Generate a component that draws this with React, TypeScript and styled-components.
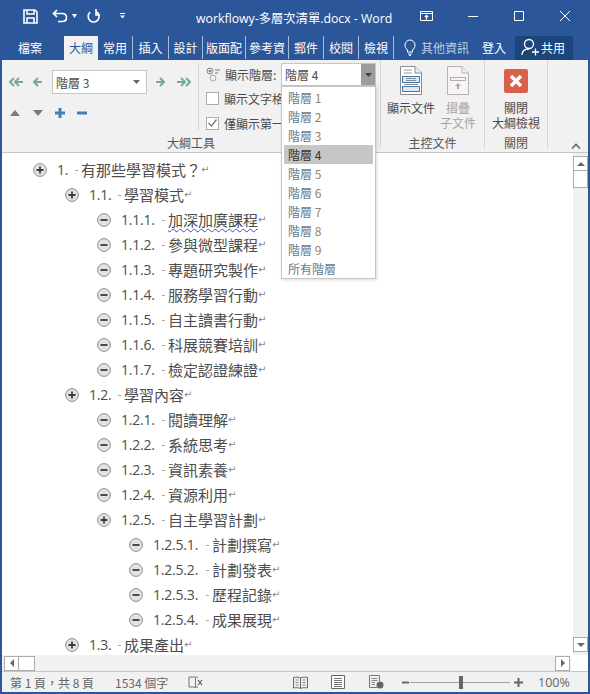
import * as React from "react";
import styled, { createGlobalStyle } from "styled-components";

const cjk = `"Noto Sans CJK TC", "Open Sans", sans-serif`;
const latin = `"Open Sans", "Noto Sans CJK TC", sans-serif`;

const GlobalStyle = createGlobalStyle`
    html, body {
        margin: 0;
        padding: 0;
        background: #2b579a;
    }
    * {
        box-sizing: border-box;
    }
`;

const Window = styled.div`
    width: 590px;
    height: 694px;
    display: flex;
    flex-direction: column;
    background: #2b579a;
    padding: 0 2px 2px 2px;
    overflow: hidden;
    font-family: ${cjk};
`;

/* title bar */
const TitleBar = styled.div`
    height: 36px;
    flex: none;
    display: flex;
    align-items: center;
    color: #fff;
`;

const Qat = styled.div`
    width: 190px;
    flex: none;
    display: flex;
    align-items: center;
    padding: 0 0 4px 21px;
`;

const QatButton = styled.span<{ $w: number }>`
    width: ${(p) => p.$w}px;
    display: flex;
    align-items: center;
`;

const DocTitle = styled.div`
    flex: none;
    width: 212px;
    padding-left: 4px;
    font-family: ${latin};
    font-size: 12.3px;
    white-space: nowrap;
`;

const WindowButtons = styled.div`
    display: flex;
    align-items: center;
    padding-bottom: 4px;
`;

const WindowButton = styled.span`
    width: 46px;
    display: flex;
    justify-content: center;
    align-items: center;
`;

/* tabs */
const TabBar = styled.div`
    height: 24px;
    flex: none;
    display: flex;
    align-items: stretch;
    color: #fff;
    font-size: 12px;
    padding-left: 16px;
`;

const FileTab = styled.div`
    width: 46px;
    padding-bottom: 2px;
    display: flex;
    align-items: center;
`;

const Tab = styled.div<{ $active?: boolean; $w: number; $sep?: boolean }>`
    width: ${(p) => p.$w}px;
    padding-bottom: ${(p) => (p.$active ? 2 : 1)}px;
    display: flex;
    align-items: center;
    justify-content: center;
    white-space: nowrap;
    overflow: hidden;
    background: ${(p) => (p.$active ? "#f1f1f1" : "transparent")};
    color: ${(p) => (p.$active ? "#2b579a" : "#fff")};
    ${(p) => (p.$sep ? "border-right: 1px solid #a9bdd9; margin-bottom: 1px;" : "")}
`;

const Hint = styled.div`
    display: flex;
    align-items: center;
    gap: 5px;
    margin-left: 10px;
    width: 78px;
    padding-bottom: 2px;
    color: #bcd0ea;
`;

const Login = styled.div`
    width: 40px;
    padding-bottom: 2px;
    display: flex;
    align-items: center;
`;

const ShareBox = styled.div`
    width: 58px;
    margin-left: -7px;
    padding: 0 0 2px 6px;
    background: #1c4679;
    display: flex;
    align-items: center;
    gap: 2px;
`;

/* ribbon */
const Ribbon = styled.div`
    height: 93px;
    flex: none;
    display: flex;
    background: #f1f1f1;
    border-bottom: 1px solid #c6c6c6;
    position: relative;
    color: #4a4a4a;
    font-size: 12px;
`;

const Group = styled.div<{ $w: number }>`
    width: ${(p) => p.$w}px;
    flex: none;
    display: flex;
    flex-direction: column;
    padding-top: 3px;
    border-right: 1px solid #d4d4d4;
    margin-bottom: 4px;
`;

const GroupBody = styled.div`
    flex: 1;
    display: flex;
    min-height: 0;
`;

const GroupLabel = styled.div`
    height: 14px;
    line-height: 14px;
    margin-bottom: -2px;
    text-align: center;
    font-size: 12px;
    color: #555;
`;

const PromoteColumn = styled.div`
    width: 197px;
    flex: none;
    display: flex;
    flex-direction: column;
    padding: 7px 0 0 7px;
    border-right: 1px solid #d4d4d4;
    margin-bottom: 6px;
`;

const ArrowRow = styled.div`
    height: 24px;
    display: flex;
    align-items: center;
`;

const ArrowSlot = styled.span<{ $w: number }>`
    width: ${(p) => p.$w}px;
    display: flex;
    align-items: center;
`;

const LevelSelect = styled.div`
    width: 95px;
    height: 24px;
    margin-right: 8px;
    background: #fff;
    border: 1px solid #c6c6c6;
    display: flex;
    align-items: center;
    justify-content: space-between;
    padding: 0 6px 0 3px;
    font-size: 12px;
`;

const MoveRow = styled.div`
    margin-top: 14px;
    padding-left: 1px;
    display: flex;
    align-items: center;
`;

const ViewColumn = styled.div`
    flex: 1;
    display: flex;
    flex-direction: column;
    padding-left: 7px;
`;

const ShowLevelRow = styled.div`
    height: 22px;
    display: flex;
    align-items: center;
    gap: 4px;
`;

const CheckRow = styled.div`
    height: 24px;
    display: flex;
    align-items: center;
    gap: 5px;
    white-space: nowrap;
    margin-top: 1px;
`;

const CheckBox = styled.span`
    width: 13px;
    height: 13px;
    flex: none;
    background: #fff;
    border: 1px solid #ababab;
    display: flex;
    align-items: center;
    justify-content: center;
`;

const ShowSelect = styled.div`
    position: absolute;
    left: 279px;
    top: 3px;
    width: 95px;
    height: 23px;
    background: #fff;
    border: 1px solid #c6c6c6;
    display: flex;
    align-items: center;
    padding-left: 3px;
    font-size: 12px;
    z-index: 3;
`;

const ShowArrow = styled.span`
    position: absolute;
    right: 0;
    top: 0;
    bottom: 0;
    width: 14px;
    background: #9c9c9c;
    display: flex;
    align-items: center;
    justify-content: center;
`;

const Dropdown = styled.div`
    position: absolute;
    left: 279px;
    top: 26px;
    width: 95px;
    height: 193px;
    background: #fff;
    border: 1px solid #c6c6c6;
    box-shadow: 1px 1px 3px rgba(0, 0, 0, 0.15);
    padding: 1px 2px;
    z-index: 4;
`;

const DropItem = styled.div<{ $selected?: boolean }>`
    height: 19px;
    line-height: 19px;
    padding-left: 4px;
    font-size: 12px;
    background: ${(p) => (p.$selected ? "#c6c6c6" : "transparent")};
    color: ${(p) => (p.$selected ? "#333" : "#5f7d96")};
`;

const LevelNumber = styled.span<{ $selected?: boolean }>`
    color: ${(p) => (p.$selected ? "#333" : "#96806c")};
`;

const BigButtons = styled.div<{ $left: number }>`
    flex: 1;
    display: flex;
    padding-left: ${(p) => p.$left}px;
`;

const BigButton = styled.div<{ $disabled?: boolean; $w: number }>`
    width: ${(p) => p.$w}px;
    display: flex;
    flex-direction: column;
    align-items: center;
    text-align: center;
    line-height: 15px;
    font-size: 12px;
    white-space: nowrap;
    color: ${(p) => (p.$disabled ? "#a6a6a6" : "#4a4a4a")};
`;

const BigIcon = styled.span`
    height: 31px;
    margin-top: 2px;
    margin-bottom: 4px;
    display: flex;
    align-items: center;
`;

const CollapseRibbon = styled.span`
    position: absolute;
    right: 7px;
    bottom: 3px;
    display: flex;
`;

/* document */
const DocArea = styled.div`
    flex: 1;
    min-height: 0;
    display: flex;
    background: #fff;
`;

const Page = styled.div`
    flex: 1;
    padding-top: 4px;
    overflow: hidden;
`;

const OutlineRow = styled.div<{ $level: number }>`
    height: 25px;
    display: flex;
    align-items: center;
    padding-left: ${(p) => 31 + (p.$level - 1) * 32}px;
    color: #4d4d4d;
    font-size: 15px;
    white-space: nowrap;
`;

const Bullet = styled.span`
    width: 14px;
    height: 14px;
    flex: none;
    margin-right: 10px;
    display: flex;
`;

const OutlineNumber = styled.span<{ $w: number }>`
    width: ${(p) => p.$w}px;
    flex: none;
    font-family: ${latin};
    font-size: 14px;
    letter-spacing: -0.2px;
    position: relative;
`;

const TabDot = styled.span`
    position: absolute;
    right: 3px;
    top: 50%;
    width: 3px;
    height: 1px;
    background: #aaa;
`;

const Squiggle = styled.span`
    text-decoration: underline wavy #3b50c8 1px;
    text-underline-offset: 2px;
`;

const ParaMark = styled.span`
    color: #888;
    font-size: 10px;
    font-family: "DejaVu Sans", sans-serif;
`;

const VScroll = styled.div`
    width: 15px;
    flex: none;
    background: #f1f1f1;
    display: flex;
    flex-direction: column;
    padding-top: 3px;
    padding-bottom: 3px;
`;

const ScrollButton = styled.span`
    width: 15px;
    height: 15px;
    flex: none;
    background: #fff;
    border: 1px solid #ababab;
    display: flex;
    align-items: center;
    justify-content: center;
`;

const VThumb = styled.span`
    width: 15px;
    height: 18px;
    background: #fff;
    border: 1px solid #ababab;
    margin-top: -1px;
`;

const ScrollSpace = styled.span`
    flex: 1;
`;

const HScrollRow = styled.div`
    height: 16px;
    flex: none;
    display: flex;
    background: #fff;
`;

const HScroll = styled.div`
    width: 569px;
    flex: none;
    background: #f1f1f1;
    display: flex;
    align-items: center;
    padding: 0 1px 0 2px;
`;

const HThumb = styled.span`
    width: 17px;
    height: 15px;
    background: #fff;
    border: 1px solid #ababab;
    margin-left: -1px;
`;

/* status bar */
const StatusBar = styled.div`
    height: 21px;
    flex: none;
    background: #f1f1f1;
    border-top: 1px solid #c6c6c6;
    display: flex;
    align-items: center;
    color: #666;
    font-size: 12px;
    padding-left: 8px;
`;

const StatusText = styled.span<{ $w: number }>`
    width: ${(p) => p.$w}px;
    flex: none;
    white-space: nowrap;
`;

const StatusIcon = styled.span<{ $w: number; $pad?: number }>`
    width: ${(p) => p.$w}px;
    padding-left: ${(p) => p.$pad ?? 0}px;
    flex: none;
    display: flex;
    align-items: center;
`;

const Slider = styled.span`
    width: 100px;
    height: 1px;
    flex: none;
    background: #a0a0a0;
    position: relative;
`;

const SliderThumb = styled.span`
    position: absolute;
    left: 49px;
    top: -6px;
    width: 4px;
    height: 13px;
    background: #666;
`;

const ZoomValue = styled.span`
    margin-left: 9px;
    font-size: 12.5px;
    font-family: ${latin};
`;

/* drawings */
const Svg = ({ w, h, children }: { w: number; h: number; children: React.ReactNode }) => (
    <svg width={w} height={h} viewBox={`0 0 ${w} ${h}`} style={{ display: "block" }}>
        {children}
    </svg>
);

const Caret = ({ color = "#fff", w = 7 }: { color?: string; w?: number }) => (
    <Svg w={w} h={4}>
        <path d={`M0 0H${w}L${w / 2} 4Z`} fill={color} />
    </Svg>
);

const SaveIcon = () => (
    <Svg w={15} h={15}>
        <path d="M1 1H12L14 3V14H1Z M4 1V5H11V1 M4 14V9H11V14" fill="none" stroke="#fff" strokeWidth="1.6" />
    </Svg>
);

const UndoIcon = () => (
    <Svg w={16} h={14}>
        <path d="M5 1L1.5 4.5L5 8M2 4.5H10C16 4.5 16 12.5 10 12.5H6" fill="none" stroke="#fff" strokeWidth="1.7" />
    </Svg>
);

const RedoIcon = () => (
    <Svg w={14} h={15}>
        <path d="M9 2.5A5.5 5.5 0 1 1 3.2 3.2M9 0V6H13" fill="none" stroke="#fff" strokeWidth="1.6" />
    </Svg>
);

const QatMore = () => (
    <Svg w={5} h={6}>
        <path d="M0 0H5V1H0ZM0 2.5H5L2.5 5.5Z" fill="#fff" />
    </Svg>
);

const RibbonDisplayIcon = () => (
    <Svg w={14} h={11}>
        <path d="M.5.5H12.5V9.5H.5ZM.5 2.5H12.5" fill="none" stroke="#fff" />
        <path d="M6.5 3.5L9 6H7.2V8.5H5.8V6H4Z" fill="#fff" />
    </Svg>
);

const MinIcon = () => (
    <Svg w={10} h={10}>
        <path d="M0 5.5H10" stroke="#fff" />
    </Svg>
);

const MaxIcon = () => (
    <Svg w={10} h={10}>
        <path d="M.5.5H9.5V9.5H.5Z" fill="none" stroke="#fff" />
    </Svg>
);

const CloseIcon = () => (
    <Svg w={10} h={10}>
        <path d="M0 0L10 10M10 0L0 10" stroke="#fff" />
    </Svg>
);

const BulbIcon = () => (
    <Svg w={12} h={17}>
        <path d="M3.5 11C2 9.5 1 8.5 1 6A5 5 0 0 1 11 6C11 8.5 10 9.5 8.5 11V13H3.5Z" fill="none" stroke="#fff" />
        <path d="M4 15H8M5 16.5H7" stroke="#fff" />
    </Svg>
);

const ShareIcon = () => (
    <Svg w={18} h={18}>
        <circle cx="8" cy="6" r="4.5" fill="none" stroke="#fff" strokeWidth="1.3" />
        <path d="M1 17C1 13 4 11 8 11M11 14H18M14.5 10.5V17.5" fill="none" stroke="#fff" strokeWidth="1.3" />
    </Svg>
);

const green = "#6fae90";
const blue = "#4a7eb8";

const ArrowLeft = () => (
    <Svg w={10} h={10}>
        <path d="M5 1L1 5L5 9M1 5H9" fill="none" stroke={green} strokeWidth="2" />
    </Svg>
);

const ArrowRight = () => (
    <Svg w={10} h={10}>
        <path d="M5 1L9 5L5 9M1 5H9" fill="none" stroke={green} strokeWidth="2" />
    </Svg>
);

const DoubleLeft = () => (
    <Svg w={15} h={10}>
        <path d="M5 1L1 5L5 9M10 1L6 5L10 9M6 5H14" fill="none" stroke={green} strokeWidth="2" />
    </Svg>
);

const DoubleRight = () => (
    <Svg w={15} h={10}>
        <path d="M5 1L9 5L5 9M10 1L14 5L10 9M1 5H9" fill="none" stroke={green} strokeWidth="2" />
    </Svg>
);

const TriUp = () => (
    <Svg w={10} h={6}>
        <path d="M0 6L5 0L10 6Z" fill="#7a7a7a" />
    </Svg>
);

const TriDown = () => (
    <Svg w={10} h={6}>
        <path d="M0 0L10 0L5 6Z" fill="#7a7a7a" />
    </Svg>
);

const PlusBlue = () => (
    <Svg w={10} h={10}>
        <path d="M5 0V10M0 5H10" stroke={blue} strokeWidth="3" />
    </Svg>
);

const MinusBlue = () => (
    <Svg w={10} h={10}>
        <path d="M0 5H10" stroke={blue} strokeWidth="3" />
    </Svg>
);

const ShowLevelIcon = () => (
    <Svg w={15} h={15}>
        <circle cx="4" cy="4" r="3" fill="none" stroke="#888" />
        <path d="M2.5 4H5.5M4 2.5V5.5" stroke="#666" />
        <circle cx="7" cy="11" r="3" fill="none" stroke="#aaa" />
        <path d="M9 3H14M9 6H12" stroke="#777" />
    </Svg>
);

const Check = () => (
    <Svg w={11} h={10}>
        <path d="M1.5 5L4.5 8L9.5 1.5" fill="none" stroke="#777" strokeWidth="1.3" />
    </Svg>
);

const ShowDocIcon = () => (
    <Svg w={22} h={29}>
        <path d="M.5.5H15L21.5 7V28.5H.5Z" fill="#fff" stroke="#8a8a8a" />
        <path d="M15 .5V7H21.5" fill="#eee" stroke="#8a8a8a" />
        <path d="M4 4H12M4 7H12" stroke="#9a9a9a" />
        <rect x="2.5" y="10.5" width="17" height="6" fill="#dce8f4" stroke="#3f7ab5" />
        <rect x="2.5" y="20.5" width="17" height="5" fill="#dce8f4" stroke="#3f7ab5" />
        <path d="M6 12.5H16M6 14.5H16M4 18.5H18" stroke="#8a8a8a" />
    </Svg>
);

const CollapseDocIcon = () => (
    <Svg w={22} h={29}>
        <path d="M.5.5H15L21.5 7V28.5H.5Z" fill="#f8f4f6" stroke="#b5b0b3" />
        <path d="M15 .5V7H21.5" fill="#eee" stroke="#b5b0b3" />
        <rect x="3.5" y="11.5" width="15" height="3" fill="none" stroke="#b8a8b0" />
        <path d="M11 17L14 20H12V23H10V20H8Z" fill="#b0a8ac" />
    </Svg>
);

const CloseOutlineIcon = () => (
    <Svg w={24} h={24}>
        <rect width="24" height="24" rx="2" fill="#d9614b" />
        <path d="M7 7L17 17M17 7L7 17" stroke="#fff" strokeWidth="3.4" />
    </Svg>
);

const Chevron = () => (
    <Svg w={10} h={6}>
        <path d="M1 5.5L5 1.5L9 5.5" fill="none" stroke="#666" strokeWidth="1.6" />
    </Svg>
);

const OutlineBullet = ({ expand }: { expand: boolean }) => (
    <Svg w={14} h={14}>
        <circle cx="7" cy="7" r="6.4" fill="#e2e2e2" stroke="#8f8f8f" />
        <path d={expand ? "M3.5 7H10.5M7 3.5V10.5" : "M3.5 7H10.5"} stroke="#3c3c3c" strokeWidth="1.8" />
    </Svg>
);

const ScrollTri = ({ dir }: { dir: "up" | "down" | "left" | "right" }) => {
    const d = { up: "M0 4L4 0L8 4Z", down: "M0 0H8L4 4Z", left: "M4 0V8L0 4Z", right: "M0 0V8L4 4Z" }[dir];
    const wide = dir === "up" || dir === "down";
    return (
        <Svg w={wide ? 8 : 4} h={wide ? 4 : 8}>
            <path d={d} fill="#666" />
        </Svg>
    );
};

const ProofIcon = () => (
    <Svg w={15} h={13}>
        <path d="M7 1H1V11H7L7.5 12V2L7 1M8 1H10M8 11H10" fill="none" stroke="#777" />
        <path d="M10 4L14 9M14 4L10 9" stroke="#555" strokeWidth="1.2" />
    </Svg>
);

const ReadIcon = () => (
    <Svg w={15} h={13}>
        <path d="M7.5 2C6 1 3 1 .5 1.5V12C3 11.5 6 11.5 7.5 12.5C9 11.5 12 11.5 14.5 12V1.5C12 1 9 1 7.5 2V12.5" fill="none" stroke="#666" />
        <path d="M2.5 4H5.5M2.5 6.5H5.5M2.5 9H5.5M9.5 4H12.5M9.5 6.5H12.5M9.5 9H12.5" stroke="#888" />
    </Svg>
);

const PrintIcon = () => (
    <Svg w={14} h={14}>
        <path d="M.5.5H13.5V13.5H.5Z" fill="#fff" stroke="#666" />
        <path d="M3 3.5H11M3 5.5H11M3 7.5H11M3 9.5H11M3 11.5H11" stroke="#777" />
    </Svg>
);

const WebIcon = () => (
    <Svg w={15} h={14}>
        <path d="M8 12.5H.5V.5H10.5V6" fill="none" stroke="#777" />
        <path d="M2.5 3.5H8.5M2.5 5.5H8.5M2.5 7.5H6M2.5 9.5H6" stroke="#888" />
        <circle cx="11" cy="10" r="3.5" fill="#666" />
    </Svg>
);

const ZoomMinus = () => (
    <Svg w={7} h={7}>
        <path d="M0 3.5H7" stroke="#666" strokeWidth="2" />
    </Svg>
);

const ZoomPlus = () => (
    <Svg w={9} h={9}>
        <path d="M0 4.5H9M4.5 0V9" stroke="#666" strokeWidth="2" />
    </Svg>
);

type Item = { level: number; num: string; text: string; expand: boolean; squiggle?: boolean };

const items: Item[] = [
    { level: 1, num: "1.", text: "有那些學習模式？", expand: true },
    { level: 2, num: "1.1.", text: "學習模式", expand: true },
    { level: 3, num: "1.1.1.", text: "加深加廣課程", expand: false, squiggle: true },
    { level: 3, num: "1.1.2.", text: "參與微型課程", expand: false },
    { level: 3, num: "1.1.3.", text: "專題研究製作", expand: false },
    { level: 3, num: "1.1.4.", text: "服務學習行動", expand: false },
    { level: 3, num: "1.1.5.", text: "自主讀書行動", expand: false },
    { level: 3, num: "1.1.6.", text: "科展競賽培訓", expand: false },
    { level: 3, num: "1.1.7.", text: "檢定認證練證", expand: false },
    { level: 2, num: "1.2.", text: "學習內容", expand: true },
    { level: 3, num: "1.2.1.", text: "閱讀理解", expand: false },
    { level: 3, num: "1.2.2.", text: "系統思考", expand: false },
    { level: 3, num: "1.2.3.", text: "資訊素養", expand: false },
    { level: 3, num: "1.2.4.", text: "資源利用", expand: false },
    { level: 3, num: "1.2.5.", text: "自主學習計劃", expand: true },
    { level: 4, num: "1.2.5.1.", text: "計劃撰寫", expand: false },
    { level: 4, num: "1.2.5.2.", text: "計劃發表", expand: false },
    { level: 4, num: "1.2.5.3.", text: "歷程記錄", expand: false },
    { level: 4, num: "1.2.5.4.", text: "成果展現", expand: false },
    { level: 2, num: "1.3.", text: "成果產出", expand: true },
];

const numberWidth: Record<number, number> = { 1: 24, 2: 35, 3: 47, 4: 59 };

const tabs = [
    { label: "常用", w: 35 },
    { label: "插入", w: 36 },
    { label: "設計", w: 34 },
    { label: "版面配", w: 43 },
    { label: "參考資", w: 43 },
    { label: "郵件", w: 35 },
    { label: "校閱", w: 35 },
    { label: "檢視", w: 35 },
];

export default function App() {
    return (
        <>
            <GlobalStyle />
            <Window>
                <TitleBar>
                    <Qat>
                        <QatButton $w={29}><SaveIcon /></QatButton>
                        <QatButton $w={20}><UndoIcon /></QatButton>
                        <QatButton $w={15}><Caret w={5} /></QatButton>
                        <QatButton $w={33}><RedoIcon /></QatButton>
                        <QatButton $w={10}><QatMore /></QatButton>
                    </Qat>
                    <DocTitle>workflowy-多層次清單.docx - Word</DocTitle>
                    <WindowButtons>
                        <WindowButton><RibbonDisplayIcon /></WindowButton>
                        <WindowButton><MinIcon /></WindowButton>
                        <WindowButton><MaxIcon /></WindowButton>
                        <WindowButton><CloseIcon /></WindowButton>
                    </WindowButtons>
                </TitleBar>

                <TabBar>
                    <FileTab>檔案</FileTab>
                    <Tab $active $w={34}>大綱</Tab>
                    {tabs.map((t) => (
                        <Tab key={t.label} $w={t.w} $sep>{t.label}</Tab>
                    ))}
                    <Hint><BulbIcon />其他資訊</Hint>
                    <Login>登入</Login>
                    <ShareBox><ShareIcon />共用</ShareBox>
                </TabBar>

                <Ribbon>
                    <Group $w={379}>
                        <GroupBody>
                            <PromoteColumn>
                                <ArrowRow>
                                    <ArrowSlot $w={24}><DoubleLeft /></ArrowSlot>
                                    <ArrowSlot $w={19}><ArrowLeft /></ArrowSlot>
                                    <LevelSelect>階層 3<Caret color="#666" /></LevelSelect>
                                    <ArrowSlot $w={21}><ArrowRight /></ArrowSlot>
                                    <ArrowSlot $w={15}><DoubleRight /></ArrowSlot>
                                </ArrowRow>
                                <MoveRow>
                                    <ArrowSlot $w={23}><TriUp /></ArrowSlot>
                                    <ArrowSlot $w={22}><TriDown /></ArrowSlot>
                                    <ArrowSlot $w={22}><PlusBlue /></ArrowSlot>
                                    <ArrowSlot $w={12}><MinusBlue /></ArrowSlot>
                                </MoveRow>
                            </PromoteColumn>
                            <ViewColumn>
                                <ShowLevelRow><ShowLevelIcon />顯示階層:</ShowLevelRow>
                                <CheckRow><CheckBox />顯示文字格</CheckRow>
                                <CheckRow><CheckBox><Check /></CheckBox>僅顯示第一</CheckRow>
                            </ViewColumn>
                        </GroupBody>
                        <GroupLabel>大綱工具</GroupLabel>
                    </Group>
                    <Group $w={104}>
                        <GroupBody>
                            <BigButtons $left={5}>
                                <BigButton $w={50}>
                                    <BigIcon><ShowDocIcon /></BigIcon>
                                    顯示文件
                                </BigButton>
                                <BigButton $w={44} $disabled>
                                    <BigIcon><CollapseDocIcon /></BigIcon>
                                    摺疊<br />子文件
                                </BigButton>
                            </BigButtons>
                        </GroupBody>
                        <GroupLabel>主控文件</GroupLabel>
                    </Group>
                    <Group $w={63}>
                        <GroupBody>
                            <BigButtons $left={1}>
                                <BigButton $w={60}>
                                    <BigIcon><CloseOutlineIcon /></BigIcon>
                                    關閉<br />大綱檢視
                                </BigButton>
                            </BigButtons>
                        </GroupBody>
                        <GroupLabel>關閉</GroupLabel>
                    </Group>
                    <CollapseRibbon><Chevron /></CollapseRibbon>

                    <ShowSelect>階層 4<ShowArrow><Caret color="#444" /></ShowArrow></ShowSelect>
                    <Dropdown>
                        {[1, 2, 3, 4, 5, 6, 7, 8, 9].map((n) => (
                            <DropItem key={n} $selected={n === 4}>
                                階層 <LevelNumber $selected={n === 4}>{n}</LevelNumber>
                            </DropItem>
                        ))}
                        <DropItem>所有階層</DropItem>
                    </Dropdown>
                </Ribbon>

                <DocArea>
                    <Page>
                        {items.map((it) => (
                            <OutlineRow key={it.num} $level={it.level}>
                                <Bullet><OutlineBullet expand={it.expand} /></Bullet>
                                <OutlineNumber $w={numberWidth[it.level]}>{it.num}<TabDot /></OutlineNumber>
                                {it.squiggle ? <Squiggle>{it.text}</Squiggle> : it.text}
                                <ParaMark>↵</ParaMark>
                            </OutlineRow>
                        ))}
                    </Page>
                    <VScroll>
                        <ScrollButton><ScrollTri dir="up" /></ScrollButton>
                        <VThumb />
                        <ScrollSpace />
                        <ScrollButton><ScrollTri dir="down" /></ScrollButton>
                    </VScroll>
                </DocArea>

                <HScrollRow>
                    <HScroll>
                        <ScrollButton><ScrollTri dir="left" /></ScrollButton>
                        <HThumb />
                        <ScrollSpace />
                        <ScrollButton><ScrollTri dir="right" /></ScrollButton>
                    </HScroll>
                </HScrollRow>

                <StatusBar>
                    <StatusText $w={105}>第 1 頁，共 8 頁</StatusText>
                    <StatusText $w={73}>1534 個字</StatusText>
                    <StatusIcon $w={105}><ProofIcon /></StatusIcon>
                    <StatusIcon $w={38}><ReadIcon /></StatusIcon>
                    <StatusIcon $w={38}><PrintIcon /></StatusIcon>
                    <StatusIcon $w={33}><WebIcon /></StatusIcon>
                    <StatusIcon $w={8}><ZoomMinus /></StatusIcon>
                    <Slider><SliderThumb /></Slider>
                    <StatusIcon $w={19} $pad={4}><ZoomPlus /></StatusIcon>
                    <ZoomValue>100%</ZoomValue>
                </StatusBar>
            </Window>
        </>
    );
}
